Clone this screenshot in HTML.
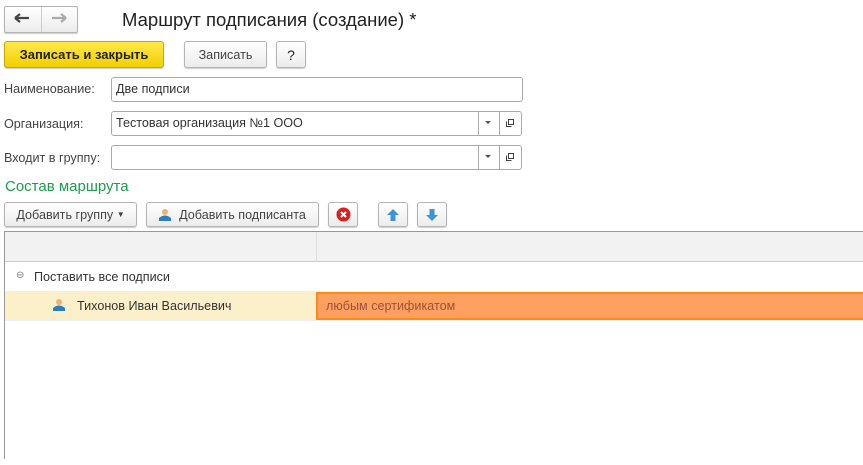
<!DOCTYPE html>
<html><head><meta charset="utf-8"><style>
*{box-sizing:border-box;margin:0;padding:0}
body{width:863px;height:465px;background:#fff;font-family:"Liberation Sans",Arial,sans-serif;font-size:12.6px;color:#333;position:relative;overflow:hidden}
.a{position:absolute}
.btn{position:absolute;border:1px solid #b4b4b4;border-radius:3px;background:linear-gradient(#fff,#ececec);box-shadow:0 1px 1px rgba(0,0,0,.2);display:flex;align-items:center;justify-content:center;color:#444}
.inp{position:absolute;border:1px solid #a9a9a9;border-radius:3px;background:#fff;height:25px;padding:0 4px;line-height:23px;color:#333}
.lbl{position:absolute;color:#444}
</style></head><body>
<div class="btn" style="left:4px;top:6px;width:74px;height:27px;border-radius:2px"></div>
<div class="a" style="left:41px;top:7px;width:1px;height:25px;background:#ccc"></div>
<svg class="a" style="left:14px;top:13px" width="16" height="10"><path d="M1 5H15M1 5L6 1M1 5L6 9" stroke="#444" stroke-width="2.2" fill="none"/></svg>
<svg class="a" style="left:51px;top:13px" width="16" height="10"><path d="M1 5H15M15 5L10 1M15 5L10 9" stroke="#aaa" stroke-width="2.2" fill="none"/></svg>
<div class="a" style="left:122px;top:9px;font-size:18.5px;color:#222">Маршрут подписания (создание) *</div>
<div class="btn" style="left:4px;top:41px;width:160px;height:27px;background:linear-gradient(#ffe94a,#f2cf00);border-color:#c9a800;color:#222;font-weight:bold;font-size:13px">Записать и закрыть</div>
<div class="btn" style="left:184px;top:41px;width:83px;height:27px">Записать</div>
<div class="btn" style="left:276px;top:41px;width:30px;height:27px;color:#222;font-size:14px">?</div>
<div class="lbl" style="left:4px;top:82px">Наименование:</div>
<div class="inp" style="left:111px;top:77px;width:412px">Две подписи</div>
<div class="lbl" style="left:4px;top:117px">Организация:</div>
<div class="inp" style="left:111px;top:111px;width:411px">Тестовая организация №1 ООО</div>
<div class="lbl" style="left:4px;top:151px">Входит в группу:</div>
<div class="inp" style="left:111px;top:145px;width:411px"></div>
<div class="a" style="left:478px;top:112px;width:1px;height:23px;background:#aaa"></div>
<div class="a" style="left:499px;top:112px;width:1px;height:23px;background:#aaa"></div>
<div class="a" style="left:478px;top:146px;width:1px;height:23px;background:#aaa"></div>
<div class="a" style="left:499px;top:146px;width:1px;height:23px;background:#aaa"></div>
<svg class="a" style="left:485px;top:121px" width="6" height="4"><path d="M0 0H6L3 3z" fill="#555"/></svg>
<svg class="a" style="left:485px;top:155px" width="6" height="4"><path d="M0 0H6L3 3z" fill="#555"/></svg>
<svg class="a" style="left:505px;top:118px" width="10" height="10"><path d="M1.5 3.5V8.5H6.5M3.5 1.5H8.5V6.5H3.5z" stroke="#444" fill="none"/></svg>
<svg class="a" style="left:505px;top:152px" width="10" height="10"><path d="M1.5 3.5V8.5H6.5M3.5 1.5H8.5V6.5H3.5z" stroke="#444" fill="none"/></svg>
<div class="a" style="left:5px;top:178px;font-size:15px;color:#1d9b4f">Состав маршрута</div>
<div class="btn" style="left:4px;top:202px;width:133px;height:25px">Добавить группу&nbsp;<span style="font-size:8px">&#9660;</span></div>
<div class="btn" style="left:146px;top:202px;width:173px;height:25px"><svg width="12" height="13" style="margin-right:8px"><circle cx="6" cy="4" r="3" fill="#f0b070"/><path d="M0 13V10Q6 5 12 10V13z" fill="#2d7fc0"/></svg>Добавить подписанта</div>
<div class="btn" style="left:328px;top:202px;width:30px;height:25px"><svg width="15" height="15"><circle cx="7.5" cy="7.5" r="7" fill="#d92020"/><path d="M5 5L10 10M10 5L5 10" stroke="#fff" stroke-width="2"/></svg></div>
<div class="btn" style="left:378px;top:202px;width:30px;height:25px"><svg width="12" height="12"><path d="M6 0L12 6H8.5V12H3.5V6H0z" fill="#3b95d8"/></svg></div>
<div class="btn" style="left:417px;top:202px;width:30px;height:25px"><svg width="12" height="12"><path d="M6 12L12 6H8.5V0H3.5V6H0z" fill="#3b95d8"/></svg></div>
<div class="a" style="left:4px;top:231px;width:859px;height:228px;border-left:1px solid #999;border-top:1px solid #999"></div>
<div class="a" style="left:5px;top:232px;width:858px;height:30px;background:#f2f2f2;border-bottom:1px solid #ccc"></div>
<div class="a" style="left:316px;top:232px;width:1px;height:30px;background:#ddd"></div>
<div class="a" style="left:16px;top:270px;font-size:10px;color:#777">&#8854;</div>
<div class="a" style="left:34px;top:270px;color:#333">Поставить все подписи</div>
<div class="a" style="left:5px;top:291px;width:858px;height:30px;background:#fbf0c9;border-top:1px solid #eee;border-bottom:1px solid #eee"></div>
<svg class="a" style="left:53px;top:298px" width="12" height="13"><circle cx="6" cy="4" r="3" fill="#f0b070"/><path d="M0 13V10Q6 5 12 10V13z" fill="#2d7fc0"/></svg>
<div class="a" style="left:77px;top:299px;color:#333">Тихонов Иван Васильевич</div>
<div class="a" style="left:316px;top:292px;width:547px;height:28px;background:#ffa060;border:2px solid #ff8a1c;border-right:none;padding-left:8px;line-height:24px;color:#a0503a">любым сертификатом</div>
</body></html>
